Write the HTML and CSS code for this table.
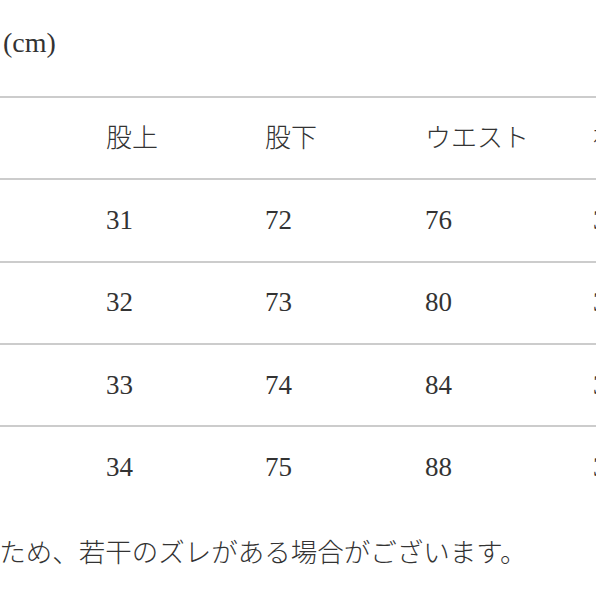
FILE: index.html
```html
<!DOCTYPE html>
<html lang="ja">
<head>
<meta charset="utf-8">
<link rel="stylesheet" href="styles.css">
</head>
<body>
<div class="page">
  <p class="unit">(cm)</p>
  <div class="sizes">
    <div class="row head">
      <span>総丈</span><span>股上</span><span>股下</span><span>ウエスト</span><span class="edge">裾幅</span>
    </div>
    <div class="row">
      <span>S</span><span>31</span><span>72</span><span>76</span><span class="edge">30</span>
    </div>
    <div class="row">
      <span>M</span><span>32</span><span>73</span><span>80</span><span class="edge">31</span>
    </div>
    <div class="row">
      <span>L</span><span>33</span><span>74</span><span>84</span><span class="edge">32</span>
    </div>
    <div class="row last">
      <span>XL</span><span>34</span><span>75</span><span>88</span><span class="edge">33</span>
    </div>
  </div>
  <p class="note">手作業で採寸しているため、若干のズレがある場合がございます。</p>
</div>
</body>
</html>
```

FILE: styles.css
```css
html, body {
  margin: 0;
  padding: 0;
  background: #ffffff;
}

.page {
  width: 596px;
  height: 596px;
  overflow: hidden;
  color: #333333;
  font-family: "Liberation Serif", "Noto Sans CJK JP", serif;
  font-weight: 300;
}

.unit {
  margin: 0;
  padding: 27px 0 0 3px;
  height: 96px;
  box-sizing: border-box;
  font-size: 28px;
  line-height: 32px;
}

.sizes {
  margin-left: -55px;
  border-top: 2px solid #cccccc;
}

.row {
  display: grid;
  grid-template-columns: repeat(5, 160px);
  align-items: center;
  height: 80.3px;
  border-bottom: 2px solid #cccccc;
  font-size: 27px;
  white-space: nowrap;
}

.row.head {
  font-size: 26px;
}

.row.head span {
  padding-bottom: 6px;
}

.row.last {
  border-bottom: none;
}

.row span:nth-child(2) {
  padding-left: 1px;
}

.row span.edge {
  padding-left: 8px;
}

.note {
  margin: 29px 0 0 -265px;
  font-size: 26.5px;
  line-height: 34px;
  white-space: nowrap;
}
```
